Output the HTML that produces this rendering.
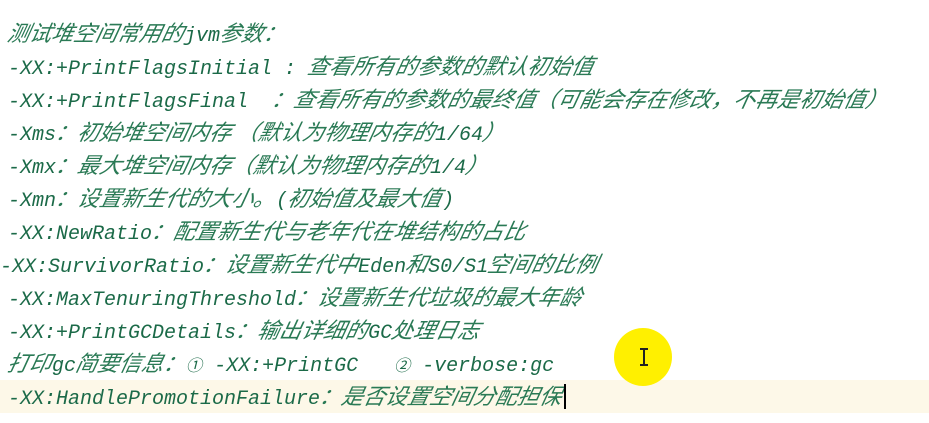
<!DOCTYPE html>
<html><head><meta charset="utf-8"><style>
html,body{margin:0;padding:0;background:#fff;width:929px;height:423px;overflow:hidden;position:relative}
.l{position:absolute;left:8px;height:33px;line-height:33px;font-family:"Liberation Mono","Noto Sans CJK SC",monospace;font-size:20px;font-style:italic;color:#1b6a48;white-space:pre}
.l b{font-weight:normal;font-size:22px;font-family:"Noto Sans CJK SC",sans-serif;color:#2a7a55;display:inline-block;transform:skewX(-12deg)}
.hl{position:absolute;left:0;top:380px;width:929px;height:33px;background:#fdf8e8}
.dot{position:absolute;left:614px;top:328px;width:58px;height:58px;border-radius:50%;background:#fff000}
.cur{position:absolute;left:643px;top:348px;width:2px;height:18px;background:#222}
.cur:before,.cur:after{content:"";position:absolute;left:-3px;width:8px;height:2px;background:#222}
.cur:before{top:0}.cur:after{bottom:0}
.car{position:absolute;left:564px;top:384px;width:2px;height:25px;background:#000}
.n{font-size:16px}
</style></head><body>
<div class="hl"></div>
<div class="l" style="top:16px"><b>测试堆空间常用的</b>jvm<b>参数：</b></div>
<div class="l" style="top:49px">-XX:+PrintFlagsInitial : <b>查看所有的参数的默认初始值</b></div>
<div class="l" style="top:82px">-XX:+PrintFlagsFinal  <b>：查看所有的参数的最终值（可能会存在修改，不再是初始值）</b></div>
<div class="l" style="top:115px">-Xms<b>：初始堆空间内存 （默认为物理内存的</b>1/64<b>）</b></div>
<div class="l" style="top:148px">-Xmx<b>：最大堆空间内存（默认为物理内存的</b>1/4<b>）</b></div>
<div class="l" style="top:181px">-Xmn<b>：设置新生代的大小。</b>(<b>初始值及最大值</b>)</div>
<div class="l" style="top:214px">-XX:NewRatio<b>：配置新生代与老年代在堆结构的占比</b></div>
<div class="l" style="top:247px;left:0">-XX:SurvivorRatio<b>：设置新生代中</b>Eden<b>和</b>S0/S1<b>空间的比例</b></div>
<div class="l" style="top:280px">-XX:MaxTenuringThreshold<b>：设置新生代垃圾的最大年龄</b></div>
<div class="l" style="top:313px">-XX:+PrintGCDetails<b>：输出详细的</b>GC<b>处理日志</b></div>
<div class="l" style="top:346px"><b>打印</b>gc<b>简要信息：</b><span class="n">①</span> -XX:+PrintGC   <span class="n">②</span> -verbose:gc</div>
<div class="l" style="top:379px">-XX:HandlePromotionFailure<b>：是否设置空间分配担保</b></div>
<div class="car"></div>
<div class="dot"></div>
<div class="cur"></div>
</body></html>
